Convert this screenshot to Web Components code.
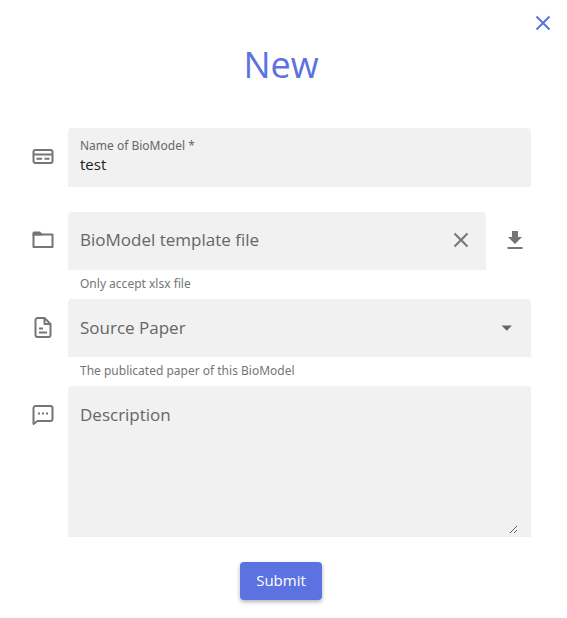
<!DOCTYPE html>
<html lang="en">
<head>
<meta charset="utf-8">
<meta name="viewport" content="width=device-width, initial-scale=1">
<title>New BioModel</title>
<style>
  body { margin: 0; background: #fff; font-family: "Open Sans", "Noto Sans", sans-serif; color: #212121;
    --accent: #5b72e0; --fill: #f1f1f1; --muted: #666; --icon: #757575; --small-font: "Noto Sans", "Open Sans", sans-serif; }
</style>
</head>
<body>
<biomodel-dialog></biomodel-dialog>
<script>
const ICONS = {
  close: '<path d="M5.5 5.500l13 13M18.500 5.500l-13 13" fill="none" stroke="currentColor" stroke-width="2"/>',
  card: '<g fill="none" stroke="currentColor" stroke-width="2"><rect x="2.500" y="5" width="19" height="13" rx="2"/><path d="M2.500 9.500h19M5.500 13.700h5.500M13.500 13.700h5"/></g>',
  folder: '<path d="M2.500 5.500h19v12.500h-19z" fill="none" stroke="currentColor" stroke-width="2" stroke-linejoin="round"/><path d="M1.500 6.500V4A1.500 1.500 0 0 1 3 2.500H9l2.500 2.500V6.500z" fill="currentColor"/>',
  paper: '<g fill="none" stroke="currentColor" stroke-width="2" stroke-linejoin="round"><path d="M13.500 2H6.500A2 2 0 0 0 4.500 4v15a2 2 0 0 0 2 2h11a2 2 0 0 0 2-2V8z"/><path d="M13.500 2.500V8H19.500M8 12.500h4M8 16.500h8"/></g>',
  chat: '<path d="M2.500 21V5a2 2 0 0 1 2-2h15a2 2 0 0 1 2 2v11a2 2 0 0 1-2 2H6.500z" fill="none" stroke="currentColor" stroke-width="2" stroke-linejoin="round"/><path d="M7 9.500h2v2H7zM11 9.500h2v2h-2zM15 9.500h2v2h-2z" fill="currentColor"/>',
  download: '<path d="M9 2h6v6h4l-7 7-7-7h4zM4.500 18h15v2h-15z" fill="currentColor"/>',
  caret: '<path d="M6.500 9.500h10.500l-5.200 5.200z" fill="currentColor"/>'
};
const define = (name, html) => customElements.define(name, class extends HTMLElement {
  connectedCallback() {
    if (this.shadowRoot) return;
    const template = document.createElement('template');
    template.innerHTML = html(this);
    this.attachShadow({ mode: 'open' }).append(template.content.cloneNode(true));
  }
});

define('ui-icon', el => `
  <style>:host { display: block; width: 24px; height: 24px; } svg { display: block; }</style>
  <svg width="24" height="24" viewBox="0 0 24 24" aria-hidden="true">${ICONS[el.getAttribute('name')]}</svg>`);

define('icon-button', el => `
  <style>
    :host { display: block; }
    button { display: grid; place-items: center; width: 100%; min-height: 24px; padding: 0; border: 0; background: none; color: inherit; cursor: pointer; }
  </style>
  <button type="button" aria-label="${el.getAttribute('label')}"><ui-icon name="${el.getAttribute('icon')}"></ui-icon></button>`);

/* One form line: leading icon, control, optional trailing action, helper text. */
define('form-row', el => `
  <style>
    :host { display: grid; grid-template-columns: 24px minmax(0, 1fr) auto; column-gap: 13px; }
    :host(:not([action])) { grid-template-columns: 24px minmax(0, 1fr); }
    .lead { height: 58px; display: flex; align-items: center; color: var(--icon); }
    .main { grid-column: 2; }
    .hint { grid-column: 2 / -1; padding: 4px 12px 0; height: 25px; font-family: var(--small-font); font-size: 12px; line-height: 20px; color: var(--icon); }
    ::slotted([slot=action]) { width: 32px; align-self: center; color: var(--icon); }
  </style>
  <div class="lead"><ui-icon name="${el.getAttribute('icon')}"></ui-icon></div>
  <div class="main"><slot></slot></div>
  <slot name="action"></slot>
  ${el.hasAttribute('hint') ? `<div class="hint">${el.getAttribute('hint')}</div>` : ''}`);

const fieldStyle = `
  :host { display: block; }
  .box { position: relative; box-sizing: border-box; min-height: 58px; background: var(--fill); border-radius: 4px 4px 0 0; }
  label { display: block; color: var(--muted); font-size: 17px; line-height: 24px; }
  input, select, textarea { font: inherit; color: inherit; border: 0; background: none; outline: 0; margin: 0; padding: 0; box-sizing: border-box; }
  .box:focus-within { box-shadow: inset 0 -2px var(--accent); }`;

define('text-field', el => `
  <style>${fieldStyle}
    .box { padding: 10px 12px 13px; }
    label { font-family: var(--small-font); font-size: 12px; line-height: 16px; }
    input { display: block; width: 100%; height: 20px; font-size: 15px; line-height: 20px; }
  </style>
  <div class="box"><label for="c">${el.getAttribute('label')}</label><input id="c" type="text" required value="${el.getAttribute('value')}"></div>`);

define('file-field', el => `
  <style>${fieldStyle}
    .box { display: flex; align-items: center; padding: 0 13px 2px 12px; }
    label { flex: 1; }
    input { position: absolute; inset: 0; width: 100%; height: 100%; opacity: 0; cursor: pointer; }
    icon-button { position: relative; width: 24px; color: var(--icon); }
  </style>
  <div class="box"><label for="c">${el.getAttribute('label')}</label><input id="c" type="file" accept=".xlsx"><icon-button label="Clear file" icon="close"></icon-button></div>`);

define('select-field', el => `
  <style>${fieldStyle}
    .box { display: flex; align-items: center; padding: 0 12px; }
    label { flex: 1; }
    ui-icon { color: var(--muted); }
    select { position: absolute; inset: 0; width: 100%; height: 100%; padding: 0 12px; appearance: none; cursor: pointer; }
  </style>
  <div class="box"><label for="c">${el.getAttribute('label')}</label><ui-icon name="caret"></ui-icon><select id="c"><option value=""></option></select></div>`);

define('area-field', el => `
  <style>${fieldStyle}
    .box { padding: 17px 13px 3px 12px; }
    textarea { display: block; width: 100%; height: 107px; resize: vertical; font-size: 15px; line-height: 20px; }
  </style>
  <div class="box"><label for="c">${el.getAttribute('label')}</label><textarea id="c"></textarea></div>`);

define('submit-button', () => `
  <style>
    :host { display: block; }
    button { height: 38px; padding: 0 16px 2px; border: 0; border-radius: 4px; background: var(--accent); color: #fff; font: inherit; font-size: 15px; line-height: 20px; cursor: pointer;
      box-shadow: 0 2px 4px rgba(0,0,0,.3); }
  </style>
  <button type="submit"><slot></slot></button>`);

define('biomodel-dialog', () => `
  <style>
    :host { display: block; }
    header { display: flex; justify-content: flex-end; padding: 11px 12px 0; color: var(--accent); }
    header icon-button { width: 24px; }
    h1 { margin: 5px 0 0; padding-right: 5px; text-align: center; color: var(--accent); font-weight: 400; font-size: 36px; line-height: 50px; }
    form { display: flex; flex-direction: column; padding: 38px 36px 18px 31px; }
    .first { margin-bottom: 25px; }
    submit-button { align-self: center; margin-top: 25px; }
  </style>
  <header><icon-button label="Close" icon="close"></icon-button></header>
  <h1>New</h1>
  <form>
    <form-row class="first" icon="card"><text-field label="Name of BioModel *" value="test"></text-field></form-row>
    <form-row icon="folder" action hint="Only accept xlsx file">
      <file-field label="BioModel template file"></file-field>
      <icon-button slot="action" label="Download template" icon="download"></icon-button>
    </form-row>
    <form-row icon="paper" hint="The publicated paper of this BioModel"><select-field label="Source Paper"></select-field></form-row>
    <form-row icon="chat"><area-field label="Description"></area-field></form-row>
    <submit-button>Submit</submit-button>
  </form>`);
</script>
</body>
</html>
